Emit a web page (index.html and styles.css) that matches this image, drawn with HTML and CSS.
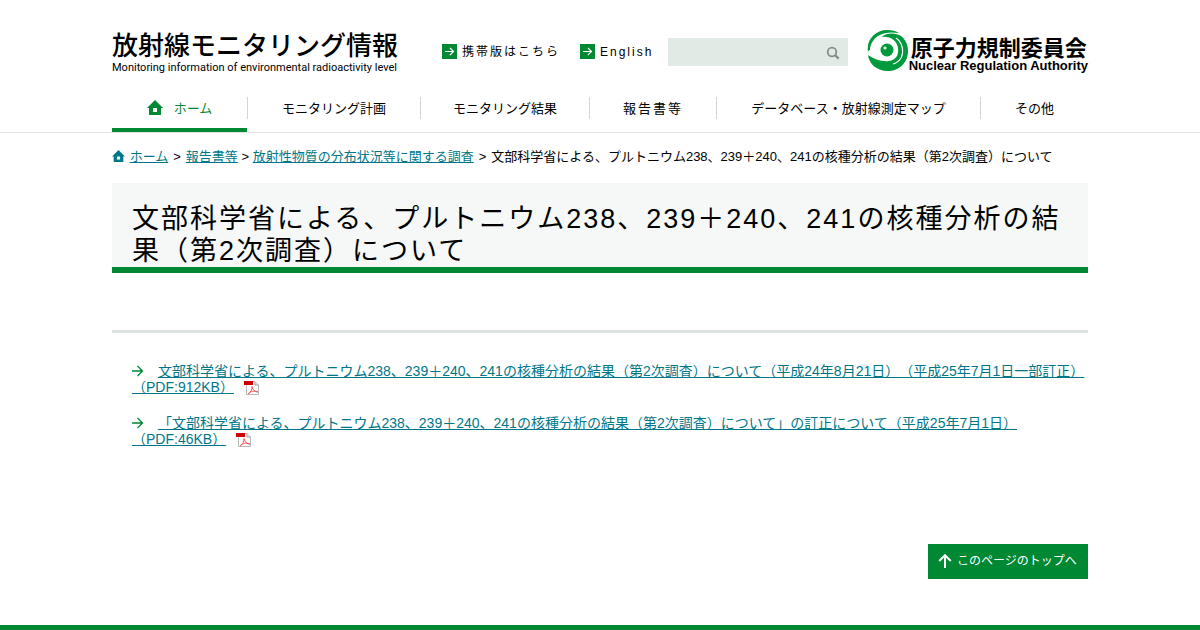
FILE: index.html
```html
<!DOCTYPE html>
<html lang="ja">
<head>
    <meta charset="UTF-8">
    <meta name="viewport" content="width=device-width, initial-scale=1.0">
    <title>文部科学省による、プルトニウム238、239＋240、241の核種分析の結果（第2次調査）について</title>
    <link rel="stylesheet" href="styles.css">
</head>
<body>

    <header id="top">
        <div class="wrap header">
            <a class="site-name" href="#">
                <span class="site-name-ja">放射線モニタリング情報</span>
                <span class="site-name-en">Monitoring information of environmental radioactivity level</span>
            </a>
            <div class="tools">
                <a class="tool-link" href="#">
                    <svg width="15" height="15" viewBox="0 0 15 15"><rect width="15" height="15" fill="#008833"/><path d="M3 7.5h8.5M8 4l3.5 3.5L8 11" fill="none" stroke="#fff" stroke-width="1.2"/></svg>
                    携帯版はこちら
                </a>
                <a class="tool-link" href="#">
                    <svg width="15" height="15" viewBox="0 0 15 15"><rect width="15" height="15" fill="#008833"/><path d="M3 7.5h8.5M8 4l3.5 3.5L8 11" fill="none" stroke="#fff" stroke-width="1.2"/></svg>
                    English
                </a>
            </div>
            <form class="search">
                <input type="text" name="q" aria-label="検索">
                <button type="submit" aria-label="検索する">
                    <svg width="14" height="14" viewBox="0 0 14 14"><circle cx="6" cy="6" r="4.3" fill="none" stroke="#84908a" stroke-width="1.8"/><path d="M9 9l3.6 3.6" stroke="#84908a" stroke-width="2.4"/></svg>
                </button>
            </form>
            <a class="nra" href="#">
                <svg width="42" height="42" viewBox="0 0 42 42">
                    <path d="M1 22C-1 10 8 0 20 0C25 0 29 1 32 3C25 2 17 2 11 6C5 10 3 16 3 20C2 20 1 21 1 22Z" fill="#009a3c"/>
                    <path d="M1 25C7 29 15 32 22 31C29 30 32 25 31 18C30 11 24 6 14 7C21 2 29 3 34 6C39 10 41 15 41 21C41 33 32 41 21 41C10 41 2 34 1 25Z" fill="#009a3c"/>
                    <path d="M29 8C36 13 37 22 34 28C32 31 30 33 26 34" fill="none" stroke="#fff" stroke-width="1.2"/>
                    <circle cx="20" cy="20" r="6.5" fill="#009a3c"/>
                    <circle cx="18" cy="18" r="1.6" fill="#d5efdd"/>
                </svg>
                <span class="nra-text">
                    <span class="nra-ja">原子力規制委員会</span>
                    <span class="nra-en">Nuclear Regulation Authority</span>
                </span>
            </a>
        </div>
        <nav>
            <ul class="wrap menu">
                <li class="current"><a href="#">
                    <svg width="16" height="16" viewBox="0 0 16 16"><path fill="#008833" fill-rule="evenodd" d="M8 0L16 8H14V15H2V8H0ZM6 8V12H10V8Z"/></svg>
                    ホーム</a></li>
                <li><a href="#">モニタリング計画</a></li>
                <li><a href="#">モニタリング結果</a></li>
                <li class="wide"><a href="#">報告書等</a></li>
                <li><a href="#">データベース・放射線測定マップ</a></li>
                <li><a href="#">その他</a></li>
            </ul>
        </nav>
    </header>

    <main class="wrap">
        <div class="breadcrumb">
            <svg width="13" height="12" viewBox="0 0 16 15"><path fill="#007788" fill-rule="evenodd" d="M8 0L16 8H14V15H2V8H0ZM6 8V12H10V8Z"/></svg>
            <a href="#">ホーム</a><span class="sep">&gt;</span><a href="#">報告書等</a> &gt; <a href="#">放射性物質の分布状況等に関する調査</a><span class="sep">&gt;</span>文部科学省による、プルトニウム238、239＋240、241の核種分析の結果（第2次調査）について
        </div>

        <h1>文部科学省による、プルトニウム238、239＋240、241の核種分析の結果（第2次調査）について</h1>

        <ul class="docs">
            <li>
                <svg class="arrow" width="12" height="12" viewBox="0 0 12 12"><path d="M0 6h10.5M5.5 1l5 5-5 5" fill="none" stroke="#008833" stroke-width="1.3"/></svg>
                <a href="#">文部科学省による、プルトニウム238、239＋240、241の核種分析の結果（第2次調査）について（平成24年8月21日）（平成25年7月1日一部訂正）（PDF:912KB）</a>
                <svg class="pdf" width="16" height="14" viewBox="0 0 16 14"><path d="M2.5 .5H11L14.5 4V13.5H2.5Z" fill="#fff" stroke="#bbb"/><path d="M11 .5V4H14.5" fill="none" stroke="#999"/><rect width="9" height="4" fill="#c00"/><path d="M4 13C7 11 8.5 8 8 5.5C8.5 9 11 11 14 11C10 9.5 7 10 4 13Z" fill="none" stroke="#e55"/></svg>
            </li>
            <li>
                <svg class="arrow" width="12" height="12" viewBox="0 0 12 12"><path d="M0 6h10.5M5.5 1l5 5-5 5" fill="none" stroke="#008833" stroke-width="1.3"/></svg>
                <a href="#">「文部科学省による、プルトニウム238、239＋240、241の核種分析の結果（第2次調査）について」の訂正について（平成25年7月1日）（PDF:46KB）</a>
                <svg class="pdf" width="16" height="14" viewBox="0 0 16 14"><path d="M2.5 .5H11L14.5 4V13.5H2.5Z" fill="#fff" stroke="#bbb"/><path d="M11 .5V4H14.5" fill="none" stroke="#999"/><rect width="9" height="4" fill="#c00"/><path d="M4 13C7 11 8.5 8 8 5.5C8.5 9 11 11 14 11C10 9.5 7 10 4 13Z" fill="none" stroke="#e55"/></svg>
            </li>
        </ul>

        <a class="page-top" href="#top">
            <svg width="14" height="14" viewBox="0 0 14 14"><path d="M7 14V1.5M1.2 7L7 1.2L12.8 7" fill="none" stroke="#fff" stroke-width="2"/></svg>
            このページのトップへ
        </a>
    </main>

    <footer></footer>

</body>
</html>
```
FILE: styles.css
```css
* {
    margin: 0;
    padding: 0;
    box-sizing: border-box;
}

body {
    font-family: "Liberation Sans", "Noto Sans CJK JP", sans-serif;
    font-size: 14px;
    line-height: 16px;
    color: #000;
    background-color: #fff;
    text-spacing-trim: space-all;
}

ul {
    list-style: none;
}

svg {
    flex-shrink: 0;
}

.wrap {
    max-width: 976px;
    margin: 0 auto;
}

/* Header */
.header {
    display: flex;
    align-items: flex-start;
    padding-top: 28px;
    height: 92px;
}

.header a {
    color: #000;
    text-decoration: none;
}

.site-name {
    display: flex;
    flex-direction: column;
    width: 330px;
    padding-top: 2px;
    white-space: nowrap;
}

.site-name-ja {
    font-size: 26px;
    line-height: 32px;
    font-weight: 500;
}

.site-name-en {
    font-family: Roboto, sans-serif;
    font-size: 11px;
    line-height: 12px;
}

.tools {
    display: flex;
    width: 226px;
    gap: 20px;
    padding-top: 16px;
}

.tool-link {
    display: flex;
    gap: 5px;
    font-size: 12px;
    letter-spacing: 2px;
    white-space: nowrap;
}

.search {
    display: flex;
    width: 180px;
    height: 28px;
    margin-top: 10px;
    background-color: #e1eae5;
}

.search input {
    flex: 1;
    min-width: 0;
    padding: 0 8px;
    border: none;
    background: none;
}

.search button {
    display: flex;
    align-items: center;
    width: 22px;
    padding-top: 2px;
    border: none;
    background: none;
    cursor: pointer;
}

.nra {
    display: flex;
    margin-left: auto;
    padding-top: 2px;
}

.nra-text {
    display: flex;
    flex-direction: column;
    padding-top: 8px;
    font-weight: bold;
    white-space: nowrap;
}

.nra-ja {
    padding-left: 2px;
    font-size: 22px;
    line-height: 22px;
}

.nra-en {
    font-size: 13px;
    line-height: 12px;
}

/* Navigation */
nav {
    border-bottom: 1px solid #e5e5e5;
}

.menu {
    display: grid;
    grid-template-columns: 135fr 173fr 169fr 127fr 264fr 108fr;
    height: 40px;
    padding-top: 5px;
}

.menu li {
    height: 22px;
    border-left: 1px solid #d5d5d5;
}

.menu a {
    display: flex;
    justify-content: center;
    font-size: 13px;
    line-height: 24px;
    color: #000;
    text-decoration: none;
    white-space: nowrap;
}

.menu .wide a {
    letter-spacing: 2px;
}

.menu .current {
    height: 35px;
    border-left: none;
    border-bottom: 4px solid #008833;
}

.menu .current a {
    gap: 11px;
    color: #008833;
}

.menu .current svg {
    margin-top: 3px;
}

/* Main */
main a {
    color: #007788;
}

.breadcrumb {
    padding-top: 16px;
    font-size: 13px;
}

.breadcrumb svg {
    margin-right: 1px;
    vertical-align: -1px;
}

.breadcrumb .sep {
    margin: 0 5px;
}

h1 {
    margin-top: 18px;
    padding: 20px 0 0 20px;
    font-size: 27px;
    font-weight: normal;
    line-height: 32px;
    letter-spacing: 2px;
    background-color: #f5f8f7;
    border-bottom: 6px solid #008833;
}

.docs {
    margin-top: 57px;
    padding: 30px 0 0 20px;
    border-top: 3px solid #dde4e1;
}

.docs li {
    margin-bottom: 20px;
}

.docs .arrow {
    margin-right: 10px;
    vertical-align: -1px;
}

.docs .pdf {
    margin-left: 6px;
    vertical-align: -3px;
}

main .page-top {
    display: flex;
    align-items: center;
    gap: 5px;
    width: 160px;
    height: 35px;
    margin: 97px 0 46px auto;
    padding: 0 0 2px 10px;
    font-size: 12px;
    color: #fff;
    text-decoration: none;
    background-color: #008833;
}

footer {
    height: 5px;
    background-color: #008833;
}
```
